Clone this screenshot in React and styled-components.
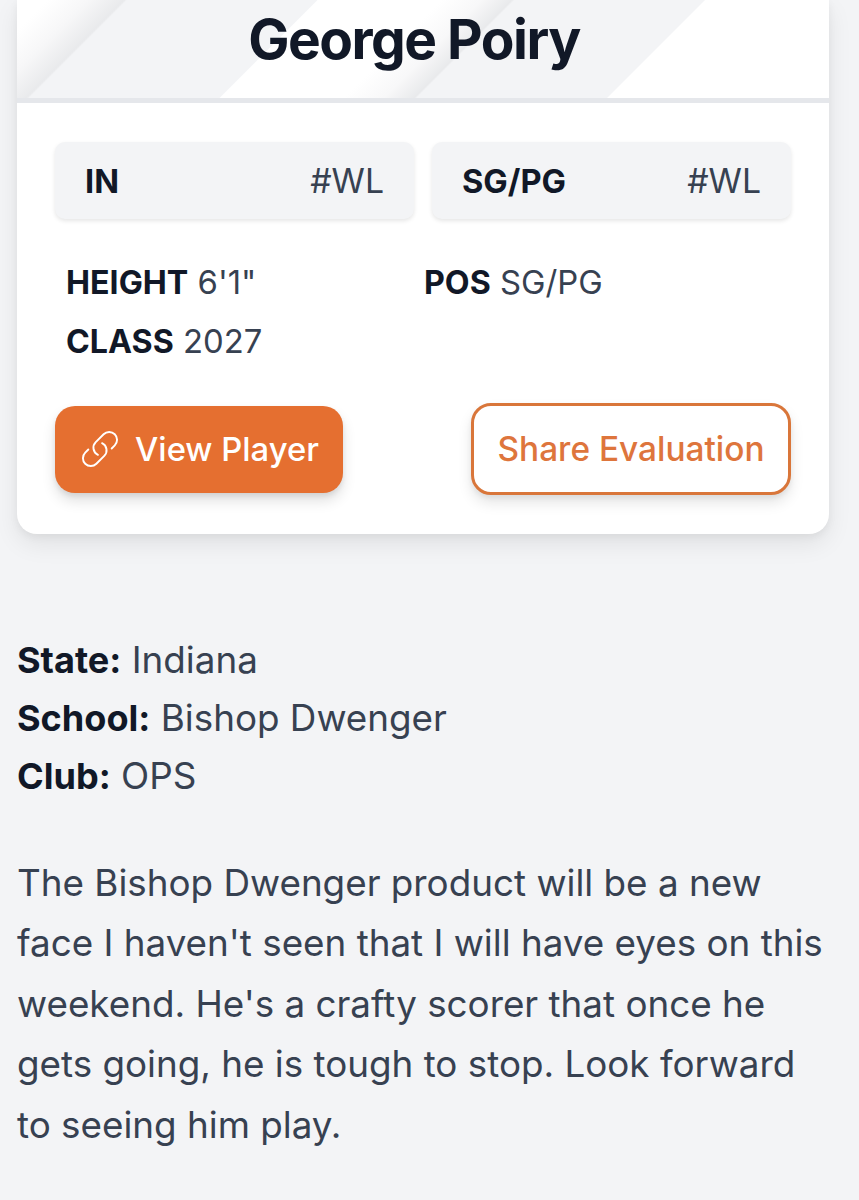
import React from 'react';
import styled, { createGlobalStyle } from 'styled-components';
import { HiOutlineLink } from 'react-icons/hi2';

const Global = createGlobalStyle`
  html, body { margin: 0; padding: 0; background: #f3f4f6; }
  body { font-family: Inter, "Noto Sans", sans-serif; color: #111827; height: 1200px; overflow: hidden; }
`;
const Page = styled.div`
  padding: 0 30px 0 17px;
`;
const Card = styled.section`
  background: #fff;
  border-radius: 0 0 20px 20px;
  box-shadow: 0 10px 24px rgba(0, 0, 0, 0.08), 0 3px 8px rgba(0, 0, 0, 0.05);
  overflow: hidden;
`;
const Header = styled.header`
  height: 98px;
  border-bottom: 5px solid #e5e7eb;
  display: flex;
  justify-content: center;
  align-items: flex-start;
  padding-right: 18px;
  background-color: #fff;
  background-image: linear-gradient(
    135deg,
    #ffffff 0, #ffffff 22px, #f7f7f8 50px, #e9eaec 76px,
    #f3f4f6 78px, #f3f4f6 212px,
    #ffffff 213px, #ffffff 300px, #f8f8f9 328px, #e9eaec 350px,
    #f3f4f6 352px, #f3f4f6 486px,
    #ffffff 487px
  );
`;
const Title = styled.h1`
  margin: 8px 0 0;
  font-size: 55px;
  line-height: 62px;
  font-weight: 700;
  letter-spacing: -1.5px;
  color: #111827;
`;
const Body = styled.div`
  padding: 39px 38px 39px;
`;
const Badges = styled.div`
  display: grid;
  grid-template-columns: 359px 359px;
  gap: 18px;
`;
const Badge = styled.div`
  height: 77px;
  box-sizing: border-box;
  padding: 0 30px;
  display: flex;
  justify-content: space-between;
  align-items: center;
  background: #f3f4f6;
  border-radius: 10px;
  box-shadow: 0 2px 4px rgba(0, 0, 0, 0.1);
`;
const BadgeName = styled.span`
  font-size: 32.6px;
  font-weight: 700;
  color: #111827;
`;
const BadgeRank = styled.span`
  font-size: 33.8px;
  color: #374151;
`;
const Stats = styled.div`
  display: grid;
  grid-template-columns: 358px 1fr;
  margin-top: 34px;
  padding-left: 11px;
  font-size: 32.8px;
  line-height: 58px;
  color: #374151;
`;
const Stat = styled.div``;
const StatLabel = styled.strong`
  font-size: 32.2px;
  font-weight: 700;
  color: #111827;
`;
const Actions = styled.div`
  display: flex;
  justify-content: space-between;
  align-items: center;
  margin-top: 32px;
`;
const Primary = styled.button`
  width: 288px;
  height: 87px;
  padding: 0;
  border: 0;
  border-radius: 20px;
  background: #e56f30;
  color: #fff;
  font: 500 32.8px Inter, sans-serif;
  display: flex;
  align-items: center;
  justify-content: center;
  gap: 14px;
  box-shadow: 0 8px 14px rgba(0, 0, 0, 0.12), 0 3px 5px rgba(0, 0, 0, 0.08);
`;
const Secondary = styled.button`
  width: 320px;
  height: 92px;
  padding: 0;
  border: 3px solid #d9763a;
  border-radius: 20px;
  background: #fff;
  color: #de753c;
  font: 500 33.4px Inter, sans-serif;
  box-shadow: 0 8px 14px rgba(0, 0, 0, 0.1), 0 3px 5px rgba(0, 0, 0, 0.06);
`;
const Article = styled.article`
  padding: 97px 30px 0 17px;
  color: #374151;
`;
const Meta = styled.p`
  margin: 0;
  font-size: 36.8px;
  line-height: 58px;
`;
const MetaLabel = styled.strong`
  font-size: 36.1px;
  font-weight: 700;
  color: #111827;
`;
const Para = styled.p`
  margin: 47.5px 0 0;
  font-size: 36.8px;
  line-height: 60.5px;
`;

export default function App() {
  return (
    <>
      <Global />
      <Page>
        <Card>
          <Header><Title>George Poiry</Title></Header>
          <Body>
            <Badges>
              <Badge><BadgeName>IN</BadgeName><BadgeRank>#WL</BadgeRank></Badge>
              <Badge><BadgeName>SG/PG</BadgeName><BadgeRank>#WL</BadgeRank></Badge>
            </Badges>
            <Stats>
              <Stat><StatLabel>HEIGHT</StatLabel> 6'1"</Stat>
              <Stat><StatLabel>POS</StatLabel> SG/PG</Stat>
              <Stat><StatLabel>CLASS</StatLabel> 2027</Stat>
            </Stats>
            <Actions>
              <Primary><HiOutlineLink size={42} strokeWidth={1.1} />View Player</Primary>
              <Secondary>Share Evaluation</Secondary>
            </Actions>
          </Body>
        </Card>
      </Page>
      <Article>
        <Meta><MetaLabel>State:</MetaLabel> Indiana<br /><MetaLabel>School:</MetaLabel> Bishop Dwenger<br /><MetaLabel>Club:</MetaLabel> OPS</Meta>
        <Para>The Bishop Dwenger product will be a new face I haven't seen that I will have eyes on this weekend. He's a crafty scorer that once he gets going, he is tough to stop. Look forward to seeing him play.</Para>
      </Article>
    </>
  );
}
